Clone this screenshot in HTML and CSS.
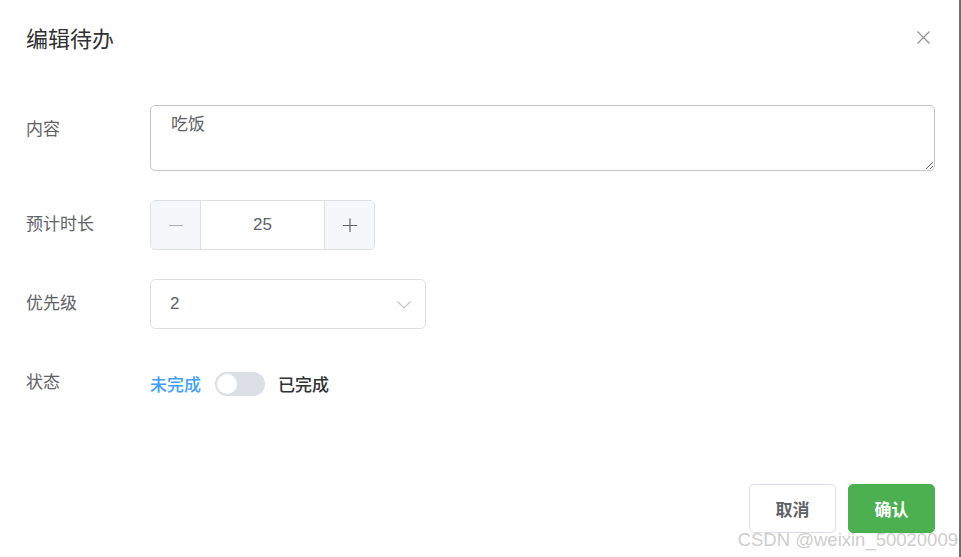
FILE: index.html
```html
<!DOCTYPE html>
<html lang="zh-CN">
<head>
<meta charset="utf-8">
<title>编辑待办</title>
<link rel="stylesheet" href="styles.css">
</head>
<body>
<div class="dialog">
  <div class="header">
    <span class="title">编辑待办</span>
    <button class="close" aria-label="关闭">
      <svg width="13" height="13" viewBox="0 0 13 13"><path d="M0.5 0.5L12.5 12.5M12.5 0.5L0.5 12.5" stroke="#909399" stroke-width="1.2" fill="none"/></svg>
    </button>
  </div>
  <div class="body">
    <div class="item">
      <label class="label">内容</label>
      <div class="content">
        <textarea class="textarea">吃饭</textarea>
      </div>
    </div>
    <div class="item">
      <label class="label">预计时长</label>
      <div class="content">
        <div class="number">
          <span class="step minus"><svg width="14" height="14" viewBox="0 0 14 14"><path d="M0 7.5H14" stroke="#a8abb2" stroke-width="1.2"/></svg></span>
          <span class="value">25</span>
          <span class="step plus"><svg width="14" height="14" viewBox="0 0 14 14"><path d="M0 7.5H14M7 0.5V14" stroke="#606266" stroke-width="1.2"/></svg></span>
        </div>
      </div>
    </div>
    <div class="item">
      <label class="label">优先级</label>
      <div class="content">
        <div class="select">
          <span class="select-value">2</span>
          <svg class="arrow" width="14" height="8" viewBox="0 0 14 8"><path d="M0.5 0.5L7 7L13.5 0.5" stroke="#c0c4cc" stroke-width="1.1" fill="none"/></svg>
        </div>
      </div>
    </div>
    <div class="item">
      <label class="label">状态</label>
      <div class="content switch-row">
        <span class="sw-text active">未完成</span>
        <span class="switch"><span class="knob"></span></span>
        <span class="sw-text">已完成</span>
      </div>
    </div>
  </div>
  <div class="footer">
    <button class="btn cancel">取消</button>
    <button class="btn confirm">确认</button>
  </div>
  <div class="watermark">CSDN @weixin_50020009</div>
</div>
</body>
</html>
```

FILE: styles.css
```css
* { box-sizing: border-box; }
html, body { margin: 0; padding: 0; background: #fff; }
body {
  font-family: "Liberation Sans", "Noto Sans CJK SC", sans-serif;
  color: #606266;
}
.dialog {
  position: relative;
  width: 961px;
  height: 557px;
  border-right: 2px solid #6f6f6f;
  display: flex;
  flex-direction: column;
  background: #fff;
}
.header {
  display: flex;
  justify-content: space-between;
  align-items: center;
  padding: 26px 29px 26px 26px;
  height: 80px;
}
.title {
  font-size: 22px;
  line-height: 28px;
  color: #303133;
}
.close {
  border: 0;
  background: none;
  padding: 0;
  width: 13px;
  height: 13px;
  display: flex;
  margin-top: -5px;
}
.body {
  padding: 25px 24px 0 26px;
}
.item {
  display: flex;
  margin-bottom: 29px;
}
.label {
  width: 124px;
  flex: none;
  font-size: 17px;
  line-height: 50px;
  height: 50px;
  color: #606266;
}
.content {
  flex: 1;
  min-height: 50px;
}
.textarea {
  display: block;
  width: 100%;
  height: 66px;
  border: 1px solid #c4c6d0;
  border-radius: 5px;
  padding: 7px 20px;
  font-family: "Liberation Sans", "Noto Sans CJK SC", sans-serif;
  font-size: 17px;
  line-height: 24px;
  color: #606266;
  resize: vertical;
  outline: none;
}
.number {
  display: flex;
  width: 225px;
  height: 50px;
  border: 1px solid #dcdfe6;
  border-radius: 5px;
  overflow: hidden;
}
.step {
  width: 50px;
  flex: none;
  background: #f5f7fa;
  display: flex;
  align-items: center;
  justify-content: center;
}
.minus { border-right: 1px solid #dcdfe6; }
.plus { border-left: 1px solid #dcdfe6; }
.value {
  flex: 1;
  text-align: center;
  font-size: 17px;
  line-height: 48px;
  color: #606266;
}
.select {
  display: flex;
  align-items: center;
  justify-content: space-between;
  width: 276px;
  height: 50px;
  border: 1px solid #dcdfe6;
  border-radius: 5px;
  padding: 0 14px 0 19px;
}
.select-value { font-size: 17px; color: #606266; }
.arrow { margin-top: 1px; }
.switch-row {
  display: flex;
  align-items: center;
  height: 50px;
  padding-top: 1px;
}
.sw-text {
  font-size: 17px;
  font-weight: 500;
  color: #303133;
}
.sw-text.active { color: #409eff; }
.switch {
  position: relative;
  width: 50px;
  height: 24px;
  border-radius: 12px;
  background: #dcdfe6;
  margin: 0 13px 0 14px;
}
.knob {
  position: absolute;
  left: 2px;
  top: 2px;
  width: 20px;
  height: 20px;
  border-radius: 50%;
  background: #fff;
}
.footer {
  margin-top: auto;
  display: flex;
  justify-content: flex-end;
  gap: 12px;
  padding: 0 24px 24px 0;
}
.btn {
  width: 87px;
  height: 49px;
  border-radius: 5px;
  font-family: "Liberation Sans", "Noto Sans CJK SC", sans-serif;
  font-size: 17px;
  font-weight: bold;
  cursor: pointer;
}
.cancel {
  background: #fff;
  border: 1px solid #dcdfe6;
  color: #606266;
}
.confirm {
  background: #4caf50;
  border: 1px solid #4caf50;
  color: #fff;
}
.watermark {
  position: absolute;
  right: 1px;
  bottom: 6px;
  font-family: "Liberation Sans", sans-serif;
  font-size: 18.5px;
  color: rgba(170, 170, 170, 0.6);
  white-space: nowrap;
  pointer-events: none;
}
```
